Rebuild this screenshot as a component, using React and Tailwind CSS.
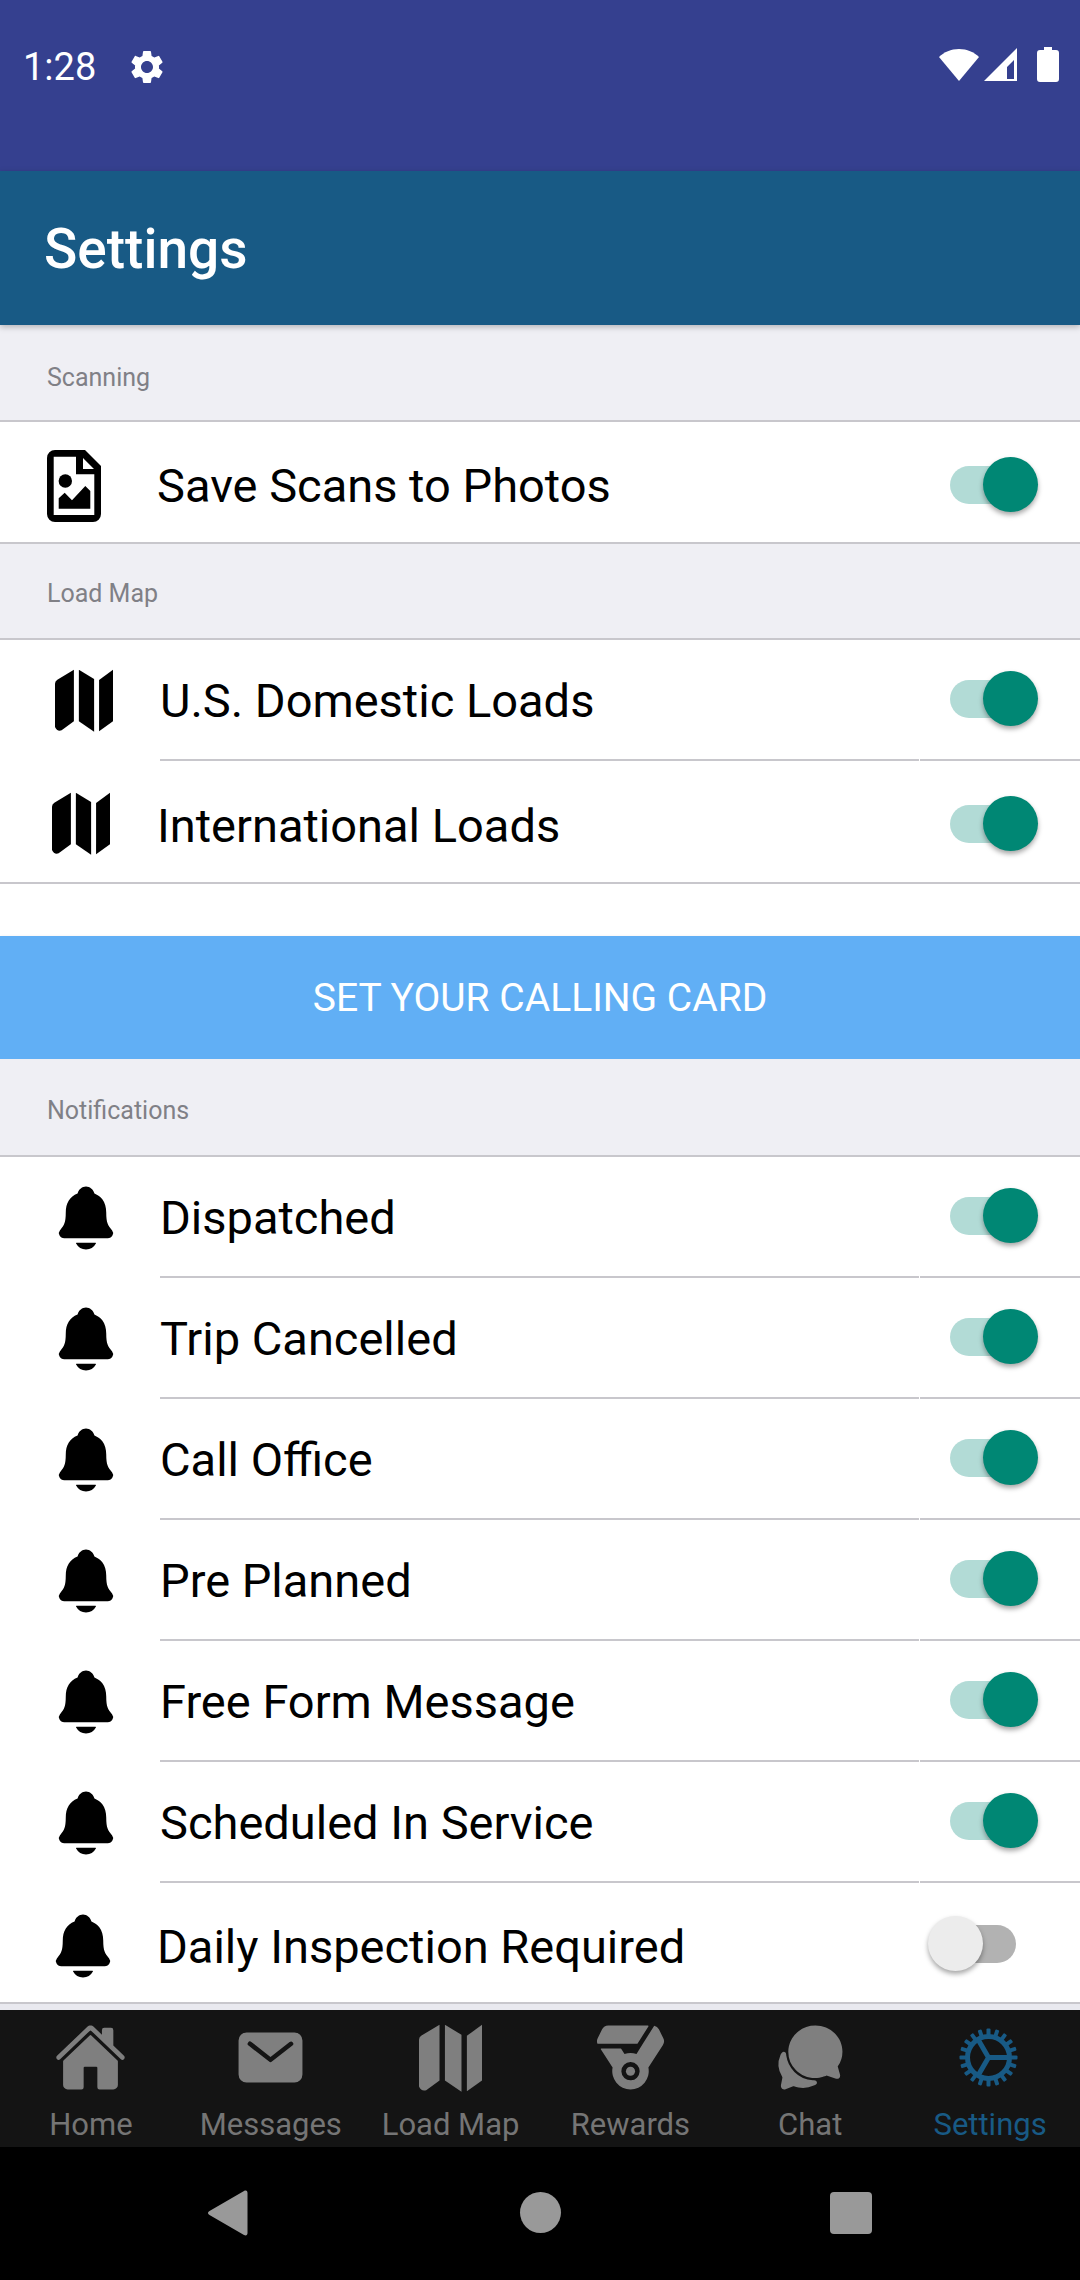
import { IoHome, IoMail, IoMedal, IoChatbubbles, IoNotifications } from 'react-icons/io5';
import { MdSettings } from 'react-icons/md';

const SectionHead = ({ label, className }) => (
  <div className={`flex items-center border-b-2 border-[#c8c7cc] bg-[#efeff4] pl-[47px] text-[25px] text-[#808086] ${className}`}>
    <span>{label}</span>
  </div>
);

const Switch = ({ on = true }) => (
  <div className={`relative h-[38px] w-[85px] rounded-full ${on ? 'bg-[#b2dbd6]' : 'bg-[#b2b2b2]'}`}>
    <div
      className={`absolute top-[-9px] h-[55px] w-[55px] rounded-full shadow-[0_3px_5px_rgba(0,0,0,0.35)] ${
        on ? 'right-[-3px] bg-[#008774]' : 'left-[-3px] bg-[#ececec]'
      }`}
    />
  </div>
);

const MapIcon = ({ className = 'h-[63px] w-[58px]' }) => (
  <svg viewBox="0 0 175 189" preserveAspectRatio="none" fill="currentColor" className={className}>
    <path d="M57 2V157L20 184q-14 4-20-10V44q0-8 7-12Z" />
    <path d="M72 2 118 30V188L72 157Z" />
    <path d="M133 33 175 2V157L133 187Z" />
  </svg>
);

const TabMapIcon = () => <MapIcon className="h-[68px] w-[63px]" />;

const BellIcon = () => <IoNotifications className="h-[72px] w-[72px]" />;

const FileImageIcon = () => (
  <svg viewBox="0 0 54 72" className="h-[72px] w-[54px]">
    <path
      fillRule="evenodd"
      d="M8 0H38L54 16V64a8 8 0 0 1-8 8H8a8 8 0 0 1-8-8V8a8 8 0 0 1 8-8ZM6.700 6.700V65H47.300V24.300H29V6.700ZM36 8 47 19H36Z"
    />
    <circle cx="18.300" cy="31" r="6.700" />
    <path d="M11.700 48.300 17.700 42.700 25 50.300 38.300 36 43.300 41V58.700H11.700Z" />
  </svg>
);

const GearIcon = () => (
  <svg viewBox="-36.500 -36.500 73 73" fill="none" stroke="currentColor" className="h-[73px] w-[73px]">
    <g transform="translate(-2 0)">
      <circle r="21" strokeWidth="5" />
      <path d="M0 0H20M0 0-10 17.300M0 0-10-17.300" strokeWidth="5" />
      {Array.from({ length: 20 }, (_, i) => (
        <rect key={i} x="-2" y="-29" width="4" height="7" rx="1" fill="currentColor" stroke="none" transform={`rotate(${i * 18})`} />
      ))}
    </g>
  </svg>
);

const Divider = () => (
  <div className="absolute bottom-0 right-0 left-[160px] flex h-[2px] gap-[1px]">
    <div className="w-[759px] bg-[#c8c7cc]" />
    <div className="flex-1 bg-[#c8c7cc]" />
  </div>
);

const Row = ({ icon, label, on, h = 'h-[121px]', iconBox, switchBox = 'pr-[45px]', full, textBox = 'pb-0' }) => (
  <div className={`relative flex shrink-0 items-center bg-white ${h} ${full ? 'border-b-2 border-[#c8c7cc]' : ''}`}>
    <div className={`flex shrink-0 items-center justify-center ${iconBox}`}>{icon}</div>
    <div className={`flex-1 text-[47px] leading-[54px] text-black ${textBox}`}>{label}</div>
    <div className={switchBox}>
      <Switch on={on} />
    </div>
    {!full && <Divider />}
  </div>
);

const notifications = [
  'Dispatched',
  'Trip Cancelled',
  'Call Office',
  'Pre Planned',
  'Free Form Message',
  'Scheduled In Service',
];

const iconClass = 'h-[73px] w-[73px]';

const tabs = [
  { label: 'Home', icon: <IoHome className={iconClass} /> },
  { label: 'Messages', icon: <IoMail className={iconClass} /> },
  { label: 'Load Map', icon: <TabMapIcon /> },
  { label: 'Rewards', icon: <IoMedal className={iconClass} /> },
  { label: 'Chat', icon: <IoChatbubbles className={iconClass} /> },
  { label: 'Settings', icon: <GearIcon />, active: true },
];

export default function App() {
  return (
    <div className="flex h-[2280px] w-[1080px] flex-col overflow-hidden bg-white font-['Roboto',sans-serif]">
      {/* status bar */}
      <div className="flex h-[171px] shrink-0 items-start justify-between bg-[#35408f] pt-[47px] pr-[21px] pl-[23px] text-white">
        <div className="flex items-center gap-[31px]">
          <span className="text-[38px] leading-[40px]">1:28</span>
          <MdSettings className="h-[40px] w-[40px]" />
        </div>
        <div className="flex items-center">
          <svg viewBox="0 0 40 32" className="mr-[5px] h-[32px] w-[40px] fill-white">
            <path d="M0 8C5 3 12 0 20 0s15 3 20 8L20 32Z" />
          </svg>
          <svg viewBox="0 0 33 33" className="mr-[20px] h-[33px] w-[33px] fill-white">
            <path fillRule="evenodd" d="M33 0V33H0ZM30 12 23 19V31H30Z" />
          </svg>
          <svg viewBox="0 0 22 35" className="h-[35px] w-[22px] fill-white">
            <path d="M7 0h8v3h4a3 3 0 0 1 3 3v26a3 3 0 0 1-3 3H3a3 3 0 0 1-3-3V6a3 3 0 0 1 3-3h4Z" />
          </svg>
        </div>
      </div>

      {/* header */}
      <div className="relative z-10 flex h-[154px] shrink-0 items-center bg-[#185a85] pt-[3px] pl-[44px] shadow-[0_2px_6px_rgba(0,0,0,0.25)]">
        <span className="text-[55px] font-medium text-white">Settings</span>
      </div>

      <div className="flex flex-1 flex-col">
        <SectionHead label="Scanning" className="h-[97px] pt-[10px]" />
        <Row
          full
          h="h-[122px]"
          icon={<FileImageIcon />}
          iconBox="w-[157px] pt-[8px] pr-[9px]"
          label="Save Scans to Photos"
          textBox="pt-[8px]"
          switchBox="pt-[6px] pr-[45px]"
        />
        <SectionHead label="Load Map" className="h-[96px] pt-[6px]" />
        <Row
          icon={<MapIcon />}
          iconBox="w-[160px] pl-[8px]"
          label="U.S. Domestic Loads"
          switchBox="pb-[3px] pr-[45px]"
        />
        <Row
          full
          h="h-[123px]"
          icon={<MapIcon />}
          iconBox="w-[157px] pt-[4px] pl-[5px]"
          label="International Loads"
          textBox="pt-[8px]"
          switchBox="pt-[4px] pr-[45px]"
        />

        {/* calling card */}
        <div className="mt-[52px] flex h-[123px] shrink-0 items-center justify-center bg-[#61aff5] pt-[2px] text-[39px] text-white shadow-[0_2px_4px_rgba(0,0,0,0.2)]">
          SET YOUR CALLING CARD
        </div>

        <SectionHead label="Notifications" className="h-[98px] pt-[8px]" />
        {notifications.map((label) => (
          <Row
            key={label}
            icon={<BellIcon />}
            iconBox="w-[160px] pl-[12px]"
            label={label}
            switchBox="pb-[3px] pr-[45px]"
          />
        ))}
        <Row
          full
          icon={<BellIcon />}
          iconBox="w-[157px] pt-[6px] pl-[9px]"
          label="Daily Inspection Required"
          on={false}
          textBox="pt-[8px]"
          switchBox="pt-[2px] pr-[64px]"
        />
        <div className="flex-1 bg-[#e9e9ef]" />
      </div>

      {/* tab bar */}
      <div className="grid h-[137px] shrink-0 grid-cols-6 bg-[#141414] pl-[1px]">
        {tabs.map(({ label, icon, active }) => (
          <div key={label} className={`flex flex-col items-center pt-[11px] ${active ? 'text-[#185a85]' : 'text-[#7f7f7f]'}`}>
            <div className="flex h-[73px] items-center justify-center">{icon}</div>
            <span className={`mt-[13px] text-[31px] leading-[36px] ${active ? '' : 'text-[#757575]'}`}>{label}</span>
          </div>
        ))}
      </div>

      {/* android nav */}
      <div className="flex h-[133px] shrink-0 items-center justify-center bg-black">
        <svg viewBox="0 0 40 46" className="mb-[2px] h-[46px] w-[40px] fill-[#999999]">
          <path d="M1.5 21 36 1c2-1 3.500-.3 3.500 2v40c0 2.300-1.500 3-3.500 2L1.500 25c-2-1-2-3 0-4Z" />
        </svg>
        <div className="mb-[2px] ml-[272px] h-[41px] w-[41px] rounded-full bg-[#999999]" />
        <div className="mb-[2px] ml-[269px] h-[42px] w-[42px] rounded-[4px] bg-[#999999]" />
      </div>
    </div>
  );
}
